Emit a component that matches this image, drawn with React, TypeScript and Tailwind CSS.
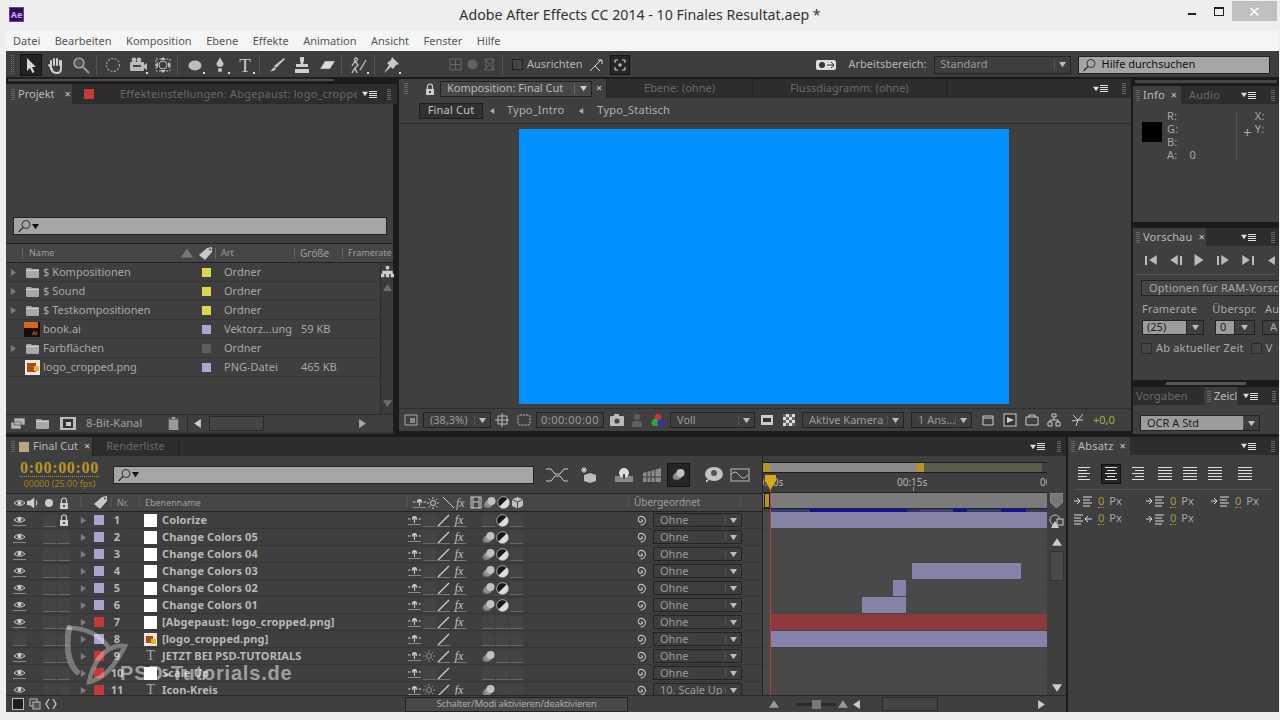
import React from 'react';

function Tri({ dir = 'down', size = 7, color = '#c4c4c4' }: { dir?: 'down' | 'up' | 'left' | 'right'; size?: number; color?: string }) {
  const pts = { down: '0,1 8,1 4,7', up: '0,7 8,7 4,1', left: '7,0 7,8 1,4', right: '1,0 1,8 7,4' }[dir];
  return (
    <svg width={size} height={size} viewBox="0 0 8 8" className="shrink-0">
      <polygon points={pts} fill={color} />
    </svg>
  );
}

function Grip() {
  return (
    <div className="flex flex-col gap-px shrink-0">
      {[0, 1, 2, 3, 4, 5].map((i) => (
        <div key={i} className="w-[4px] h-px bg-[#666]" />
      ))}
    </div>
  );
}

function PanelMenu() {
  return (
    <div className="flex items-center gap-px shrink-0">
      <Tri size={6} color="#ddd" />
      <div className="flex flex-col gap-px">
        <div className="w-[8px] h-px bg-[#ddd]" />
        <div className="w-[8px] h-px bg-[#ddd]" />
        <div className="w-[8px] h-px bg-[#ddd]" />
        <div className="w-[8px] h-px bg-[#ddd]" />
      </div>
    </div>
  );
}

function Close() {
  return <span className="text-[11px] leading-none text-[#c8c8c8]">×</span>;
}

function Sel({ label, className, text = 'text-[#9a9a9a]' }: { label: string; className: string; text?: string }) {
  return (
    <div className={`flex items-center border border-[#232323] bg-[#3e3e3e] shrink-0 overflow-hidden ${className}`}>
      <span className={`flex-1 pl-[6px] whitespace-nowrap overflow-hidden ${text}`}>{label}</span>
      <div className="w-px h-[70%] bg-[#555]" />
      <div className="w-[15px] flex justify-center shrink-0">
        <Tri size={7} color="#bbb" />
      </div>
    </div>
  );
}

function Search({ className, label }: { className: string; label?: string }) {
  return (
    <div className={`flex items-center border border-[#222] bg-[#a5a5a5] ${className}`}>
      <svg width="15" height="14" viewBox="0 0 15 14" className="ml-[3px] shrink-0">
        <circle cx="9" cy="5.5" r="4" fill="none" stroke="#333" strokeWidth="1" />
        <line x1="6" y1="8.5" x2="1.5" y2="13" stroke="#333" strokeWidth="1.2" />
      </svg>
      {label ? <span className="ml-[5px] text-[#111] text-[11px]">{label}</span> : <Tri size={7} color="#111" />}
    </div>
  );
}

function Svg({ w = 16, h = 16, children, className = '' }: { w?: number; h?: number; children: React.ReactNode; className?: string }) {
  return (
    <svg width={w} height={h} viewBox={`0 0 ${w} ${h}`} className={`shrink-0 ${className}`}>
      {children}
    </svg>
  );
}

const Eye = () => (
  <Svg w={13} h={11}>
    <path d="M1 5 Q6.5 -0.5 12 5 Q6.5 9.5 1 5Z" fill="none" stroke="#ccc" strokeWidth="1" />
    <circle cx="6.5" cy="4.6" r="2" fill="#ccc" />
    <line x1="0" y1="10.5" x2="13" y2="10.5" stroke="#8a8a8a" />
  </Svg>
);
const Lock = () => (
  <Svg w={10} h={12}>
    <path d="M2.5 6 V3.5 a2.5 2.5 0 0 1 5 0 V6" fill="none" stroke="#ccc" strokeWidth="1.2" />
    <rect x="1" y="6" width="8" height="6" fill="#ccc" />
    <rect x="4" y="8" width="2" height="2" fill="#444" />
  </Svg>
);
const Tag = () => (
  <Svg w={16} h={15}>
    <path d="M1 9 L9 2 L14 1 L14 6 L7 14Z" fill="#c8c8c8" />
    <circle cx="12" cy="3.5" r="1" fill="#444" />
  </Svg>
);
const Shy = () => (
  <Svg w={13} h={10}>
    <path d="M0 4 H2.5 M10.5 4 H13" stroke="#ccc" strokeWidth="1" />
    <path d="M4 3.5 a2.5 2.5 0 0 1 5 0 v1.2 h-5Z" fill="#ccc" />
    <path d="M5.5 3.5 V4.5 M7.5 3.5 V4.5" stroke="#444" strokeWidth="0.8" />
    <path d="M6.5 5 V8" stroke="#ccc" strokeWidth="1" />
    <line x1="0" y1="9.5" x2="13" y2="9.5" stroke="#8a8a8a" />
  </Svg>
);
const Slash = () => (
  <Svg w={13} h={13}>
    <line x1="1" y1="12" x2="12" y2="1" stroke="#d0d0d0" strokeWidth="1.2" />
    <line x1="0" y1="12.5" x2="13" y2="12.5" stroke="#777" />
  </Svg>
);
const Sun = ({ c = '#aaa' }: { c?: string }) => (
  <Svg w={12} h={12}>
    <circle cx="6" cy="6" r="2.5" fill="none" stroke={c} />
    <path d="M6 0 V2 M6 10 V12 M0 6 H2 M10 6 H12 M1.8 1.8 L3.2 3.2 M8.8 8.8 L10.2 10.2 M1.8 10.2 L3.2 8.8 M8.8 3.2 L10.2 1.8" stroke={c} />
  </Svg>
);
const Fx = () => (
  <span className="w-[13px] border-b border-[#777] h-[13px] flex items-center justify-center text-[12px] leading-none italic text-[#c4c4c4] [font-family:'Liberation_Serif',serif]">
    fx
  </span>
);
const Blur = () => (
  <Svg w={13} h={13}>
    <ellipse cx="4.5" cy="9" rx="4" ry="3" fill="#777" />
    <ellipse cx="6" cy="7.5" rx="4" ry="3.5" fill="#8f8f8f" />
    <circle cx="8.5" cy="5" r="4" fill="#c2c2c2" />
  </Svg>
);
const Adj = () => (
  <Svg w={13} h={13}>
    <circle cx="6.5" cy="6.5" r="5.8" fill="#181818" stroke="#c8c8c8" strokeWidth="0.8" />
    <path d="M10.6 2.4 A5.8 5.8 0 0 1 2.4 10.6Z" fill="#dcdcdc" />
  </Svg>
);
const Cube = () => (
  <Svg w={13} h={13}>
    <path d="M6.5 1 L12 3.5 V10 L6.5 12.5 L1 10 V3.5Z" fill="#c0c0c0" />
    <path d="M1 3.5 L6.5 6 L12 3.5 M6.5 6 V12.5" stroke="#444" fill="none" />
  </Svg>
);
const Spiral = () => (
  <Svg w={12} h={12}>
    <path d="M6 6 a1 1 0 0 1 1.5 1 a2.2 2.2 0 0 1 -3.5 0.5 a3.3 3.3 0 0 1 1 -5 a4.5 4.5 0 0 1 5.5 4 a5 5 0 0 1 -5 4.5" fill="none" stroke="#c4c4c4" strokeWidth="1.1" />
  </Svg>
);
const Box = () => <div className="w-[13px] h-[13px] bg-[#444] border-b border-[#666]" />;
const Folder = () => (
  <Svg w={13} h={11}>
    <path d="M0 2 Q0 1 1 1 H5 L6 2 H12 Q13 2 13 3 V10 Q13 11 12 11 H1 Q0 11 0 10Z" fill="#a8a8a8" />
    <rect x="0" y="3" width="13" height="1" fill="#d0d0d0" />
  </Svg>
);
const Thumb = ({ s = 14 }: { s?: number }) => (
  <Svg w={s} h={s}>
    <rect width={s} height={s} fill="#f0e8dc" />
    <rect x="2" y="3" width={s - 6} height={s - 6} fill="#b24a14" />
    <rect x={s - 6} y="6" width="5" height="5" fill="#e9b52c" />
  </Svg>
);
const AiIcon = () => (
  <Svg w={16} h={15}>
    <rect width="16" height="15" fill="#1a0d00" />
    <rect x="0" y="0" width="14" height="6" fill="#d3671a" />
    <text x="8" y="13" fontSize="6" fill="#e88a2a" fontFamily="Liberation Sans">Ai</text>
  </Svg>
);

/* toolbar drawings */
const tools: Record<string, React.ReactNode> = {
  arrow: <path d="M5 2 V15 L8 12 L10.5 17 L12.5 16 L10 11 L14 11Z" fill="#d8d8d8" />,
  hand: <path d="M4 9 V5 M7 9 V3 M10 9 V3 M13 9 V5 M4 9 L4 13 Q6 17 10 17 Q14 17 14 12 V5 M2 9 L5 13" stroke="#cfcfcf" strokeWidth="2" fill="none" strokeLinecap="round" />,
  zoom: (
    <>
      <circle cx="7" cy="7" r="5" fill="#555" stroke="#b8b8b8" strokeWidth="1.2" />
      <line x1="11" y1="11" x2="17" y2="17" stroke="#999" strokeWidth="2" />
    </>
  ),
  rotate: <circle cx="9" cy="9" r="6.5" fill="none" stroke="#999" strokeWidth="1.3" strokeDasharray="2 1.5" />,
  camera: (
    <>
      <rect x="1" y="6" width="14" height="9" rx="1" fill="#bbb" />
      <circle cx="5" cy="4" r="2.4" fill="#bbb" />
      <circle cx="10" cy="4" r="2.4" fill="#bbb" />
      <rect x="4" y="9" width="8" height="2" fill="#444" />
      <polygon points="15,9 18,7 18,14 15,12" fill="#bbb" />
    </>
  ),
  pan: (
    <>
      <rect x="2" y="3" width="14" height="12" fill="none" stroke="#bbb" strokeDasharray="2 1.5" />
      <circle cx="9" cy="9" r="4" fill="none" stroke="#bbb" />
      <path d="M9 1 L6 4 H12Z M9 17 L6 14 H12Z M1 9 L4 6 V12Z M17 9 L14 6 V12Z" fill="#bbb" />
    </>
  ),
  ellipse: <ellipse cx="9" cy="9.5" rx="6.5" ry="5" fill="#bdbdbd" />,
  pen: <path d="M9 1 L13 8 L11 11 H7 L5 8Z M7 12 H11 V16 H7Z" fill="#c8c8c8" stroke="#444" strokeWidth="0.5" />,
  type: <text x="9" y="16" textAnchor="middle" fontSize="19" fill="#c8c8c8" fontFamily="Liberation Serif">T</text>,
  brush: <path d="M16 2 L17 3 L8 12 L6 10Z M6 11 L8 13 Q5 16 2 15 Q4 14 6 11Z" fill="#c8c8c8" />,
  stamp: <path d="M7 1 H11 V5 L10 8 H15 V11 H3 V8 H8 L7 5Z M2 13 H16 V17 H2Z" fill="#d0d0d0" />,
  eraser: <path d="M7 5 H17 L12 13 H2Z" fill="#dcdcdc" stroke="#555" strokeWidth="0.5" />,
  roto: <path d="M6 2 a1.5 1.5 0 1 1 -0.1 0 M5 5 L8 9 L5 12 L7 17 M5 5 L2 10 M8 9 L5 12 L2 17 M10 14 L16 4" stroke="#bbb" strokeWidth="1.4" fill="none" />,
  pin: <path d="M10 1 L17 8 L14 9 L11 13 L9 11 L2 17 L7 9 L5 7 L9 4Z" fill="#c8c8c8" />,
};

function Tool({ name, active, corner, className = '' }: { name: string; active?: boolean; corner?: boolean; className?: string }) {
  return (
    <div className={`relative w-[25px] h-[25px] flex items-center justify-center shrink-0 ${className}`}>
      <div className={`w-[22px] h-[22px] flex items-center justify-center ${active ? 'bg-[#222] border border-[#111]' : ''}`}>
        <Svg w={18} h={18}>{tools[name]}</Svg>
      </div>
      {corner && <div className="absolute right-[2px] bottom-[3px] w-[2px] h-[2px] bg-[#ddd]" />}
    </div>
  );
}

const Sep = ({ className = '' }: { className?: string }) => <div className={`w-px h-[20px] bg-[#555] shrink-0 ${className}`} />;

function Toolbar() {
  return (
    <div className="h-[26px] pt-px bg-[#3d3d3d] flex items-center shrink-0 text-[11px] text-[#b4b4b4]">
      <div className="ml-[5px] w-[3px] h-[19px] border-x border-dotted border-[#777] mr-[4px]" />
      <Tool name="arrow" active />
      <Tool name="hand" />
      <Tool name="zoom" />
      <Sep className="ml-[3px] mr-[3px]" />
      <Tool name="rotate" />
      <Tool name="camera" corner />
      <Tool name="pan" />
      <Sep className="ml-[2px] mr-[4px]" />
      <Tool name="ellipse" corner />
      <Tool name="pen" corner />
      <Tool name="type" corner />
      <Sep className="ml-[2px] mr-[4px]" />
      <Tool name="brush" />
      <Tool name="stamp" />
      <Tool name="eraser" />
      <Sep className="ml-[2px] mr-[4px]" />
      <Tool name="roto" corner />
      <Sep className="ml-[3px] mr-[3px]" />
      <Tool name="pin" corner />
      <div className="ml-[46px] flex items-center gap-[4px] opacity-40">
        <Svg w={13} h={13}><path d="M1 1 H12 V12 H1Z M6.5 2 V11 M2 6.5 H11" fill="none" stroke="#aaa" /></Svg>
        <Svg w={13} h={13}><circle cx="6.5" cy="6.5" r="5" fill="#999" /></Svg>
        <Svg w={13} h={13}><path d="M1 1 L12 12 M12 1 L1 12 M3 1 H10 V12 H3Z" fill="none" stroke="#aaa" /></Svg>
      </div>
      <Sep className="ml-[6px] mr-[9px]" />
      <div className="w-[11px] h-[11px] border border-[#222] bg-[#444]" />
      <span className="ml-[4px]">Ausrichten</span>
      <Svg w={14} h={14} className="ml-[6px]"><path d="M1 13 L6 8 L11 13 M6 8 L12 2 M9 2 H13 V6" fill="none" stroke="#ddd" /></Svg>
      <div className="ml-[7px] w-[20px] h-[20px] bg-[#262626] border border-[#151515] flex items-center justify-center">
        <Svg w={12} h={12}><path d="M1 4 V1 H4 M8 1 H11 V4 M11 8 V11 H8 M4 11 H1 V8 M5 5 H7 V7 H5Z" fill="none" stroke="#ddd" /></Svg>
      </div>
      <Svg w={20} h={12} className="ml-[186px]">
        <rect x="0" y="1" width="20" height="10" rx="2" fill="#ddd" />
        <circle cx="6" cy="6" r="3" fill="#333" />
        <path d="M11 6 H18 M15 3 L18 6 L15 9" stroke="#333" fill="none" />
      </Svg>
      <span className="ml-[13px] whitespace-nowrap">Arbeitsbereich:</span>
      <Sel label="Standard" className="ml-[7px] w-[137px] h-[18px]" />
      <Search className="ml-[7px] w-[192px] h-[18px]" label="Hilfe durchsuchen" />
    </div>
  );
}

function ProjectPanel() {
  const rows = [
    { name: '$ Kompositionen', c: 'bg-[#dcd64e]', type: 'Ordner', size: '', icon: 'f' },
    { name: '$ Sound', c: 'bg-[#dcd64e]', type: 'Ordner', size: '', icon: 'f' },
    { name: '$ Testkompositionen', c: 'bg-[#dcd64e]', type: 'Ordner', size: '', icon: 'f' },
    { name: 'book.ai', c: 'bg-[#aaa6cf]', type: 'Vektorz...ung', size: '59 KB', icon: 'a' },
    { name: 'Farbflächen', c: 'bg-[#5e5e5e]', type: 'Ordner', size: '', icon: 'f' },
    { name: 'logo_cropped.png', c: 'bg-[#aaa6cf]', type: 'PNG-Datei', size: '465 KB', icon: 't' },
  ];
  return (
    <div className="w-[391px] flex flex-col shrink-0">
      <div className="ml-[2px] mt-px w-[326px] h-[4px] bg-[#4a4a4a] border-y border-[#222] shrink-0" />
      <div className="h-[20px] mt-[2px] flex items-center bg-[#2d2d2d] shrink-0 text-[11px]">
        <div className="w-[66px] h-full bg-[#3f3f3f] flex items-center pl-[5px] gap-[3px] text-[#b8b8b8]">
          <Grip />
          <span>Projekt</span>
          <div className="ml-[7px]"><Close /></div>
        </div>
        <div className="w-[12px]" />
        <div className="w-[10px] h-[10px] bg-[#c23b3b]" />
        <span className="ml-[26px] w-[237px] overflow-hidden whitespace-nowrap text-[#696969] tracking-[0.2px]">Effekteinstellungen: Abgepaust: logo_cropped.png</span>
        <div className="ml-[5px]"><PanelMenu /></div>
        <div className="ml-[10px]"><Grip /></div>
      </div>
      <div className="flex-1 bg-[#3f3f3f] flex flex-col mr-[4px] min-h-0">
        <div className="h-[113px] shrink-0" />
        <Search className="ml-[7px] w-[374px] h-[18px]" />
        <div className="h-[9px] shrink-0 border-b border-[#222]" />
        <div className="h-[19px] shrink-0 flex items-center text-[9px] text-[#9d9d9d] bg-[#464646] border-b border-[#222]">
          <div className="ml-[16px] w-px h-[11px] bg-[#666]" />
          <span className="ml-[6px] w-[152px]">Name</span>
          <Tri dir="up" size={12} color="#777" />
          <div className="ml-[5px]"><Tag /></div>
          <div className="ml-px w-px h-[11px] bg-[#666]" />
          <span className="ml-[5px] w-[73px]">Art</span>
          <div className="w-px h-[11px] bg-[#666]" />
          <span className="ml-[5px] w-[42px] text-[10px]">Größe</span>
          <div className="w-px h-[11px] bg-[#666]" />
          <span className="ml-[5px] whitespace-nowrap">Framerate</span>
        </div>
        <div className="flex-1 flex min-h-0">
          <div className="flex-1 flex flex-col text-[11px] text-[#a8a8a8]">
            {rows.map((r) => (
              <div key={r.name} className="h-[19px] shrink-0 flex items-center border-b border-[#363636]">
                <div className="ml-[4px] w-[8px]">{r.icon === 'f' && <Tri dir="right" size={7} color="#7a7a7a" />}</div>
                <div className="ml-[4px] w-[20px] flex justify-center">
                  {r.icon === 'f' ? <Folder /> : r.icon === 'a' ? <AiIcon /> : <Thumb s={15} />}
                </div>
                <span className="ml-px w-[159px] whitespace-nowrap">{r.name}</span>
                <div className={`w-[9px] h-[9px] ${r.c}`} />
                <span className="ml-[13px] w-[77px] whitespace-nowrap">{r.type}</span>
                <span className="whitespace-nowrap">{r.size}</span>
              </div>
            ))}
            <div className="flex-1" />
          </div>
          <div className="w-[13px] shrink-0 border-l border-[#2c2c2c] flex flex-col items-center bg-[#3b3b3b]">
            <Svg w={13} h={12} className="mt-[3px]">
              <path d="M5 0 H8 V3 H5Z M0 8 H3 V11 H0Z M5 8 H8 V11 H5Z M10 8 H13 V11 H10Z M1.5 8 V5 H11.5 V8 M6.5 3 V8" fill="#ccc" stroke="#ccc" strokeWidth="0.5" />
            </Svg>
            <div className="mt-[5px]"><Tri dir="up" size={9} color="#6e6e6e" /></div>
            <div className="flex-1" />
            <div className="mb-[6px]"><Tri size={9} color="#6e6e6e" /></div>
          </div>
        </div>
        <div className="h-[18px] shrink-0 flex items-center border-t border-[#2a2a2a] text-[11px] text-[#a0a0a0]">
          <Svg w={16} h={13} className="ml-[5px]"><path d="M3 1 H14 V8 H3Z M0 5 H10 V12 H0Z" fill="#b4b4b4" stroke="#444" strokeWidth="0.6" /></Svg>
          <div className="ml-[9px]"><Folder /></div>
          <Svg w={16} h={13} className="ml-[11px]"><rect width="16" height="13" fill="#bbb" /><rect x="3" y="2" width="10" height="9" fill="#333" /><rect x="6" y="5" width="5" height="4" fill="#ccc" /></Svg>
          <span className="ml-[10px] whitespace-nowrap">8-Bit-Kanal</span>
          <Svg w={11} h={13} className="ml-[26px]"><path d="M0 2 H11 M4 2 V0 H7 V2 M1 3 H10 V13 H1Z" fill="#9a9a9a" stroke="#9a9a9a" strokeWidth="0.6" /></Svg>
          <div className="ml-[8px] h-full flex flex-1 items-center border-l border-[#2a2a2a]">
            <div className="ml-[5px]"><Tri dir="left" size={9} color="#ccc" /></div>
            <div className="ml-[7px] w-[55px] h-[15px] bg-[#444] border border-[#282828]" />
            <div className="ml-auto mr-[8px]"><Tri dir="right" size={9} color="#aaa" /></div>
          </div>
          <div className="w-[18px]" />
        </div>
        <div className="h-[2px] shrink-0 bg-[#333]" />
      </div>
    </div>
  );
}

function CompPanel() {
  const Mini = ({ children, className = '' }: { children: React.ReactNode; className?: string }) => (
    <Svg w={14} h={14} className={className}>{children}</Svg>
  );
  return (
    <div className="w-[732px] flex flex-col shrink-0 mb-[3px]">
      <div className="h-[2px] shrink-0" />
      <div className="h-[19px] shrink-0 flex items-center bg-[#2d2d2d] text-[11px]">
        <div className="w-[208px] h-full bg-[#3f3f3f] flex items-center pl-[5px] border-r border-[#222] shrink-0">
          <Grip />
          <div className="ml-[17px] w-[10px] h-[10px] flex items-center justify-center"><Lock /></div>
          <div className="ml-[5px] w-[152px] h-[16px] border border-[#222] bg-[#474747] flex items-center text-[#b8b8b8]">
            <span className="ml-[6px] flex-1 whitespace-nowrap">Komposition: Final Cut</span>
            <div className="w-px h-[10px] bg-[#666]" />
            <div className="w-[16px] flex justify-center"><Tri color="#ccc" /></div>
          </div>
          <div className="ml-[4px]"><Close /></div>
        </div>
        <div className="w-[146px] h-full flex items-center justify-center text-[#696969] border-r border-[#222] shrink-0">Ebene: (ohne)</div>
        <div className="w-[194px] h-full flex items-center justify-center text-[#696969] border-r border-[#222] shrink-0">Flussdiagramm: (ohne)</div>
        <div className="ml-auto mr-[14px]"><PanelMenu /></div>
        <div className="mr-[5px]"><Grip /></div>
      </div>
      <div className="h-[26px] shrink-0 bg-[#3f3f3f] border-b border-[#2b2b2b] flex items-center text-[11px] text-[#b0b0b0] tracking-[0.2px]">
        <div className="ml-[20px] w-[64px] h-[16px] bg-[#303030] border border-[#1e1e1e] flex items-center justify-center text-[#c4c4c4]">Final Cut</div>
        <div className="ml-[6px]"><Tri dir="left" size={6} color="#aaa" /></div>
        <span className="ml-[12px]">Typo_Intro</span>
        <div className="ml-[14px]"><Tri dir="left" size={6} color="#aaa" /></div>
        <span className="ml-[13px]">Typo_Statisch</span>
      </div>
      <div className="flex-1 min-h-0 bg-[#3f3f3f] flex items-start">
        <div className="ml-[120px] mt-[5px] w-[490px] h-[275px] bg-[#0090ff]" />
      </div>
      <div className="h-[23px] shrink-0 bg-[#3f3f3f] border-t border-[#2f2f2f] flex items-center text-[11px] text-[#9a9a9a]">
        <Mini className="ml-[5px]"><path d="M1 2 H13 V12 H1Z" fill="none" stroke="#aaa" /><rect x="6" y="5" width="5" height="5" fill="#888" /></Mini>
        <Sel label="(38,3%)" className="ml-[5px] w-[68px] h-[16px]" />
        <Mini className="ml-[4px]"><path d="M3 3 H12 V11 H3Z M0 7 H15 M7 0 V14" fill="none" stroke="#bbb" /></Mini>
        <Mini className="ml-[8px]"><rect x="1" y="2" width="12" height="10" rx="2" fill="none" stroke="#bbb" strokeDasharray="2 1" /></Mini>
        <div className="ml-[5px] w-[68px] h-[16px] border border-[#232323] flex items-center justify-center tracking-[0.5px] shrink-0">0:00:00:00</div>
        <Mini className="ml-[6px]"><rect y="3" width="14" height="10" rx="1" fill="#bbb" /><rect x="4" y="1" width="5" height="3" fill="#bbb" /><circle cx="7" cy="8" r="2.6" fill="#444" /></Mini>
        <Mini className="ml-[6px]"><circle cx="7" cy="4" r="3" fill="#5f5f5f" /><path d="M2 14 V10 Q2 8 7 8 Q12 8 12 10 V14Z" fill="#5f5f5f" /></Mini>
        <Mini className="ml-[7px]"><circle cx="7" cy="4.5" r="3.5" fill="#c33" /><circle cx="4" cy="9.5" r="3.5" fill="#3a3" /><circle cx="10" cy="9.5" r="3.5" fill="#33a" /></Mini>
        <Sel label="Voll" className="ml-[5px] w-[85px] h-[16px]" />
        <Mini className="ml-[5px]"><rect x="1" y="2" width="12" height="10" fill="#ccc" /><rect x="3" y="5" width="8" height="4" fill="#333" /></Mini>
        <Mini className="ml-[8px]"><rect x="1" y="1" width="12" height="12" fill="#ddd" /><path d="M1 1 H4 V4 H1Z M7 1 H10 V4 H7Z M4 4 H7 V7 H4Z M10 4 H13 V7 H10Z M1 7 H4 V10 H1Z M7 7 H10 V10 H7Z M4 10 H7 V13 H4Z M10 10 H13 V13 H10Z" fill="#666" /></Mini>
        <Sel label="Aktive Kamera" className="ml-[6px] w-[102px] h-[16px]" />
        <Sel label="1 Ans..." className="ml-[7px] w-[61px] h-[16px]" />
        <Mini className="ml-[9px]"><path d="M2 3 H12 V12 H2Z M2 5 H12" fill="none" stroke="#ccc" /></Mini>
        <Mini className="ml-[8px]"><rect x="1" y="1" width="12" height="12" fill="#333" stroke="#ccc" /><polygon points="4,4 11,7 4,10" fill="#ccc" /></Mini>
        <Mini className="ml-[8px]"><path d="M1 4 H13 V12 H1Z M4 4 V2 H10 V4" fill="none" stroke="#ccc" /></Mini>
        <Mini className="ml-[8px]"><path d="M5 1 H9 V4 H5Z M1 9 H5 V13 H1Z M9 9 H13 V13 H9Z M7 4 V7 H3 V9 M7 7 H11 V9" fill="none" stroke="#ccc" /></Mini>
        <Mini className="ml-[10px]"><path d="M7 7 L2 2 M7 7 L12 1 M7 7 L1 8 M7 7 L12 7 M7 7 L5 13" stroke="#ccc" fill="none" /></Mini>
        <span className="ml-[8px] text-[#a8ad4a] whitespace-nowrap">+0,0</span>
      </div>
    </div>
  );
}

function SmallTabs({ active, other, activeW }: { active: string; other: string; activeW: string }) {
  return (
    <div className="h-[18px] flex items-center bg-[#2d2d2d] text-[11px] shrink-0 overflow-hidden">
      <div className={`${activeW} h-full bg-[#3f3f3f] flex items-center pl-[3px] gap-[3px] text-[#b8b8b8] shrink-0 tracking-[0.2px]`}>
        <Grip />
        <span>{active}</span>
        <div className="ml-[3px]"><Close /></div>
      </div>
      {other && <span className="ml-[8px] text-[#696969] tracking-[0.2px]">{other}</span>}
      <div className="ml-auto mr-[6px]"><PanelMenu /></div>
      <div className="mr-[4px] ml-[9px]"><Grip /></div>
    </div>
  );
}

function RightColumn() {
  const btn = (dir: 'left' | 'right', bar: 'l' | 'r') => (
    <div className="w-[24px] flex items-center justify-center gap-px shrink-0">
      {bar === 'l' && <div className="w-[2px] h-[9px] bg-[#bbb]" />}
      <Tri dir={dir} size={10} color="#bbb" />
      {bar === 'r' && <div className="w-[2px] h-[9px] bg-[#bbb]" />}
    </div>
  );
  return (
    <div className="flex-1 flex flex-col min-w-0 text-[11px] text-[#a8a8a8] overflow-hidden">
      <div className="h-[4px] mt-[3px] mx-[2px] bg-[#444] border-b border-[#222] shrink-0" />
      <div className="h-[2px] shrink-0" />
      <SmallTabs active="Info" other="Audio" activeW="w-[48px]" />
      <div className="h-[118px] shrink-0 bg-[#3f3f3f] flex items-start tracking-[0.2px]">
        <div className="ml-[9px] mt-[18px] w-[20px] h-[20px] bg-black shrink-0" />
        <div className="ml-[5px] mt-[5px] w-[69px] flex flex-col leading-[13px] shrink-0">
          <span>R:</span>
          <span>G:</span>
          <span>B:</span>
          <span>A:&nbsp;&nbsp;&nbsp;&nbsp;0</span>
        </div>
        <div className="mt-[8px] w-px h-[48px] bg-[#555] shrink-0" />
        <span className="ml-[6px] mt-[21px] text-[15px] leading-none">+</span>
        <div className="ml-[3px] mt-[5px] flex flex-col leading-[13px]">
          <span>X:</span>
          <span>Y:</span>
        </div>
      </div>
      <div className="h-[6px] shrink-0" />
      <SmallTabs active="Vorschau" other="" activeW="w-[73px]" />
      <div className="h-[134px] shrink-0 bg-[#3f3f3f] overflow-hidden">
        <div className="h-[29px] mx-[3px] border-b border-[#555] flex items-center pl-[3px]">
          {btn('left', 'l')}
          {btn('left', 'r')}
          <div className="w-[24px] flex justify-center shrink-0"><Tri dir="right" size={12} color="#bbb" /></div>
          {btn('right', 'l')}
          {btn('right', 'r')}
          <div className="w-[24px] flex justify-center shrink-0"><Tri dir="left" size={9} color="#bbb" /></div>
        </div>
        <div className="ml-[8px] mt-[5px] w-[160px] h-[16px] border border-[#232323] bg-[#464646] flex items-center pl-[7px] whitespace-nowrap tracking-[0.2px]">Optionen für RAM-Vorschau</div>
        <div className="ml-[9px] mt-[6px] flex gap-[17px] tracking-[0.2px] whitespace-nowrap leading-[14px]">
          <span>Framerate</span>
          <span className="-ml-[2px]">Überspr.</span>
          <span className="-ml-[9px]">Auflösung</span>
        </div>
        <div className="ml-[9px] mt-[4px] flex items-center text-[#222] whitespace-nowrap">
          <div className="w-[45px] h-[15px] bg-[#9c9c9c] pl-[4px] flex items-center border border-[#232323] shrink-0">(25)</div>
          <div className="w-[17px] h-[15px] border border-[#232323] border-l-0 flex items-center justify-center shrink-0"><Tri color="#bbb" /></div>
          <div className="ml-[11px] w-[20px] h-[15px] bg-[#9c9c9c] pl-[4px] flex items-center border border-[#232323] shrink-0">0</div>
          <div className="w-[20px] h-[15px] border border-[#232323] border-l-0 flex items-center justify-center shrink-0"><Tri color="#bbb" /></div>
          <div className="ml-[7px] w-[30px] h-[15px] border border-[#232323] pl-[7px] flex items-center text-[#a8a8a8] shrink-0">A</div>
        </div>
        <div className="ml-[8px] mt-[5px] flex items-center whitespace-nowrap tracking-[0.2px]">
          <div className="w-[11px] h-[11px] border border-[#2a2a2a] bg-[#444] shrink-0" />
          <span className="ml-[4px]">Ab aktueller Zeit</span>
          <div className="ml-[7px] w-[11px] h-[11px] border border-[#2a2a2a] bg-[#444] shrink-0" />
          <span className="ml-[4px]">V</span>
        </div>
      </div>
      <div className="h-[7px] shrink-0 flex items-center justify-center">
        <div className="w-[80px] h-[3px] bg-[#555]" />
      </div>
      <div className="h-[18px] flex items-center bg-[#2d2d2d] shrink-0">
        <span className="ml-[2px] w-[69px] h-full flex items-center text-[#696969] tracking-[0.2px] pl-px">Vorgaben</span>
        <div className="w-[33px] h-full bg-[#3f3f3f] flex items-center pl-[3px] gap-[3px] text-[#b8b8b8] overflow-hidden shrink-0">
          <Grip />
          <span>Zeicl</span>
        </div>
        <div className="ml-[6px]"><PanelMenu /></div>
        <div className="ml-[14px]"><Grip /></div>
      </div>
      <div className="flex-1 bg-[#3f3f3f] flex items-start">
        <Sel label="OCR A Std" className="ml-[7px] mt-[10px] w-[120px] h-[16px]" text="text-[#222] bg-[#9c9c9c] h-full flex items-center" />
      </div>
    </div>
  );
}

type Row = { n: number; name: string; label: string; src: 's' | 't' | 'x'; eye?: boolean; lock?: boolean; sun?: boolean; fx?: boolean; blur?: boolean; adj?: boolean; parent?: string; noBox?: boolean; bar?: string };
const LAV = 'bg-[#a8a4cc]';
const RED = 'bg-[#bf3a3a]';
const layers: Row[] = [
  { n: 1, name: 'Colorize', label: LAV, src: 's', eye: true, lock: true, fx: true, adj: true, bar: 'ml-[8px] w-[276px] bg-[#8683a8]' },
  { n: 2, name: 'Change Colors 05', label: LAV, src: 's', eye: true, fx: true, blur: true, adj: true },
  { n: 3, name: 'Change Colors 04', label: LAV, src: 's', eye: true, fx: true, blur: true, adj: true },
  { n: 4, name: 'Change Colors 03', label: LAV, src: 's', eye: true, fx: true, blur: true, adj: true, bar: 'ml-[149px] w-[109px] bg-[#8683a8]' },
  { n: 5, name: 'Change Colors 02', label: LAV, src: 's', eye: true, fx: true, blur: true, adj: true, bar: 'ml-[130px] w-[13px] bg-[#8683a8]' },
  { n: 6, name: 'Change Colors 01', label: LAV, src: 's', eye: true, fx: true, blur: true, adj: true, bar: 'ml-[99px] w-[44px] bg-[#8683a8]' },
  { n: 7, name: '[Abgepaust: logo_cropped.png]', label: RED, src: 's', eye: true, fx: true, bar: 'ml-[8px] w-[276px] bg-[#8c3a3e]' },
  { n: 8, name: '[logo_cropped.png]', label: LAV, src: 'x', noBox: true, bar: 'ml-[8px] w-[276px] bg-[#8683a8]' },
  { n: 9, name: 'JETZT BEI PSD-TUTORIALS', label: RED, src: 't', eye: true, sun: true, fx: true, blur: true },
  { n: 10, name: 'Scale Up', label: RED, src: 's', eye: true },
  { n: 11, name: 'Icon-Kreis', label: RED, src: 't', eye: true, sun: true, fx: true, blur: true, parent: '10. Scale Up' },
];

function LayerRow({ r }: { r: Row }) {
  const cell = 'w-[14px] flex justify-center shrink-0';
  return (
    <div className="h-[17px] shrink-0 flex items-center border-b border-[#363636] text-[11px]">
      <div className="ml-[7px] w-[13px] flex justify-center shrink-0">{r.eye ? <Eye /> : <Box />}</div>
      <div className="w-[17px] shrink-0" />
      <div className="w-[14px] shrink-0"><Box /></div>
      <div className="w-[14px] shrink-0">{r.lock ? <div className="w-[13px] h-[13px] flex justify-center"><Lock /></div> : <Box />}</div>
      <div className="ml-[9px] w-[7px] shrink-0"><Tri dir="right" size={7} color="#7d7d7d" /></div>
      <div className={`ml-[7px] w-[10px] h-[10px] shrink-0 ${r.label}`} />
      <span className="w-[26px] text-center font-bold text-[#b8b8b8] shrink-0">{r.n}</span>
      <div className="ml-[14px] w-[13px] h-[13px] shrink-0 flex items-center justify-center">
        {r.src === 's' && <div className="w-[13px] h-[13px] bg-white" />}
        {r.src === 'x' && <Thumb s={13} />}
        {r.src === 't' && <span className="text-[14px] leading-none text-[#aaa] [font-family:'Liberation_Serif',serif]">T</span>}
      </div>
      <span className="ml-[5px] w-[245px] font-bold text-[#b8b8b8] whitespace-nowrap shrink-0 tracking-[0.1px]">{r.name}</span>
      <div className={`${cell} w-[15px]`}><Shy /></div>
      <div className={cell}>{r.sun ? <Sun c="#8f8f8f" /> : r.noBox ? null : <Box />}</div>
      <div className={cell}><Slash /></div>
      <div className={`${cell} ml-[2px]`}>{r.fx ? <Fx /> : null}</div>
      <div className="w-[15px] shrink-0" />
      <div className={cell}>{r.blur ? <Blur /> : <Box />}</div>
      <div className={cell}>{r.adj ? <Adj /> : <Box />}</div>
      <div className={cell}><Box /></div>
      <div className="ml-[112px] w-[12px] shrink-0"><Spiral /></div>
      <Sel label={r.parent ?? 'Ohne'} className="ml-[6px] w-[89px] h-[14px]" />
    </div>
  );
}

const motionStrip = [
  'w-[40px] bg-[#3a3a72]', 'w-[30px] bg-[#10129a]', 'w-[70px] bg-[#10129a]', 'w-[12px] bg-[#34346e]', 'w-[35px] bg-[#3e3e72]',
  'w-[15px] bg-[#10129a]', 'w-[35px] bg-[#3a3a72]', 'w-[25px] bg-[#10129a]', 'w-[22px] bg-[#3a3a5a]',
];

function Timeline() {
  return (
    <div className="w-[1060px] h-full flex flex-col shrink-0 bg-[#3f3f3f]">
      <div className="h-[19px] shrink-0 flex items-center bg-[#2d2d2d] text-[11px]">
        <div className="w-[87px] h-full bg-[#3f3f3f] flex items-center pl-[5px] text-[#b8b8b8] border-r border-[#222] whitespace-nowrap">
          <Grip />
          <div className="ml-[4px] w-[10px] h-[10px] bg-[#b9a585] shrink-0" />
          <span className="ml-[4px]">Final Cut</span>
          <div className="ml-[6px]"><Close /></div>
        </div>
        <span className="w-[86px] h-full flex items-center justify-center text-[#696969] border-r border-[#222]">Renderliste</span>
        <div className="ml-auto mr-[12px]"><PanelMenu /></div>
        <div className="mr-[5px]"><Grip /></div>
      </div>
      <div className="flex-1 min-h-0 flex relative">
        <div className="w-[757px] shrink-0 flex flex-col min-h-0 border-r border-[#222]">
          <div className="h-[37px] shrink-0 flex items-center">
            <div className="ml-[12px] w-[83px] flex flex-col items-center">
              <span className="text-[16px] leading-[16px] font-bold text-[#b5971f] border-b border-dotted border-[#b5971f] whitespace-nowrap [font-family:'Liberation_Serif',serif] tracking-[0.7px]">0:00:00:00</span>
              <span className="text-[9px] leading-[13px] text-[#9c8420] whitespace-nowrap">00000 (25.00 fps)</span>
            </div>
            <Search className="ml-[12px] w-[421px] h-[18px]" />
            <div className="ml-[11px] flex items-center">
              <Svg w={24} h={16}><path d="M1 2 H6 L10 7 H15 L19 2 H23 M1 14 H6 L10 9 H15 L19 14 H23" stroke="#ccc" fill="none" /></Svg>
              <Svg w={20} h={18} className="ml-[11px]"><path d="M10 7 L16 9 V15 L10 17 L4 15 V9Z" fill="#bbb" /><path d="M4 1 L4 7 M1 4 H7 M2 2 L6 6 M6 2 L2 6" stroke="#ddd" /></Svg>
              <Svg w={20} h={16} className="ml-[14px]"><path d="M1 9 H19 V15 H1Z" fill="#888" /><circle cx="10" cy="6" r="5" fill="#ddd" /><rect x="9" y="7" width="2" height="5" fill="#444" /></Svg>
              <Svg w={20} h={16} className="ml-[8px]"><path d="M1 6 L19 1 V15 H1Z" fill="#8a8a8a" /><path d="M5 2 V15 M9 2 V15 M13 2 V15 M1 10 H19" stroke="#3f3f3f" /></Svg>
              <div className="ml-[5px] w-[23px] h-[24px] bg-[#252525] border border-[#151515] flex items-center justify-center"><Blur /></div>
              <Svg w={20} h={18} className="ml-[13px]"><ellipse cx="11" cy="8" rx="9" ry="7" fill="#c4c4c4" /><circle cx="11" cy="7" r="3" fill="#555" /><path d="M3 14 L7 13 L3 17Z" fill="#c4c4c4" /></Svg>
              <Svg w={20} h={14} className="ml-[7px]"><rect x="1" y="1" width="18" height="12" fill="none" stroke="#bbb" /><path d="M1 7 Q5 1 9 7 T18 7" fill="none" stroke="#bbb" /></Svg>
            </div>
          </div>
          <div className="h-[19px] shrink-0 flex items-center text-[9px] text-[#9d9d9d] border-y border-[#222] bg-[#464646]">
            <div className="ml-[7px]"><Svg w={13} h={10}><path d="M1 5 Q6.5 0 12 5 Q6.5 10 1 5Z" fill="none" stroke="#ccc" /><circle cx="6.5" cy="5" r="2" fill="#ccc" /></Svg></div>
            <Svg w={12} h={12} className="ml-px"><path d="M0 4 H3 L7 1 V11 L3 8 H0Z M9 3 Q11 6 9 9" fill="#ccc" stroke="#ccc" strokeWidth="0.5" /></Svg>
            <div className="ml-[6px] w-[8px] h-[8px] rounded-full bg-[#ccc]" />
            <div className="ml-[6px]"><Lock /></div>
            <div className="ml-[11px] w-px h-[11px] bg-[#555]" />
            <div className="ml-[12px]"><Tag /></div>
            <div className="ml-[2px] w-px h-[11px] bg-[#555]" />
            <span className="ml-[5px] w-[22px]">Nr.</span>
            <div className="w-px h-[11px] bg-[#555]" />
            <span className="ml-[5px] w-[262px]">Ebenenname</span>
            <div className="w-px h-[11px] bg-[#555]" />
            <div className="ml-[5px] flex items-center gap-px">
              <Shy /><Sun c="#ccc" /><div className="w-px" /><Svg w={13} h={13}><line x1="1" y1="1" x2="12" y2="12" stroke="#ccc" /></Svg>
              <span className="w-[13px] text-[12px] italic text-[#bbb] [font-family:'Liberation_Serif',serif]">fx</span>
              <Svg w={12} h={13}><rect x="1" y="1" width="10" height="11" fill="none" stroke="#ccc" /><path d="M3 1 V12 M9 1 V12 M3 6 H9" stroke="#ccc" /></Svg>
              <Blur /><Adj /><Cube />
            </div>
            <div className="ml-[104px] w-px h-[11px] bg-[#555]" />
            <span className="ml-[5px] w-[106px] text-[10px] whitespace-nowrap">Übergeordnet</span>
            <div className="w-px h-[11px] bg-[#555]" />
          </div>
          <div className="flex-1 min-h-0 overflow-hidden flex flex-col">
            {layers.map((r) => <LayerRow key={r.n} r={r} />)}
          </div>
        </div>
        <div className="w-[284px] shrink-0 flex flex-col min-h-0">
          <div className="h-[6px] shrink-0" />
          <div className="h-[11px] shrink-0 flex border-y border-[#1c1c1c]">
            <div className="w-[7px] bg-[#b5951f]" />
            <div className="w-[147px] bg-[#8a8a8a]" />
            <div className="w-[7px] bg-[#b5951f]" />
            <div className="w-[118px] bg-[#5c5c4c]" />
          </div>
          <div className="h-[20px] shrink-0 flex items-center text-[10px] text-[#b4b4b4] border-b border-[#222] whitespace-nowrap overflow-hidden relative">
            <span className="ml-[-10px] w-[30px] shrink-0">00:00s</span>
            <span className="ml-[114px] w-[30px] shrink-0">00:15s</span>
            <span className="ml-[113px] shrink-0">00:30s</span>
            <div className="absolute left-[150px] bottom-px w-px h-[4px] bg-[#999]" />
          </div>
          <div className="h-[16px] shrink-0 flex bg-[#7b7b7b] border-b border-[#222]">
            <div className="ml-px w-[6px] bg-[#b5951f] border border-[#222]" />
          </div>
          <div className="h-[3px] shrink-0 flex pl-[8px]">
            {motionStrip.map((c, i) => <div key={i} className={c} />)}
          </div>
          <div className="flex-1 min-h-0 overflow-hidden flex flex-col bg-[#494949]">
            {layers.map((r) => (
              <div key={r.n} className="h-[17px] shrink-0 flex border-b border-[#454545]">
                {r.bar && <div className={r.bar} />}
              </div>
            ))}
          </div>
        </div>
        <div className="flex-1 flex flex-col items-center min-h-0">
          <div className="h-[37px] shrink-0" />
          <Svg w={13} h={15}><path d="M0 0 H13 V9 L6.5 15 L0 9Z" fill="#777" stroke="#aaa" strokeWidth="0.6" /></Svg>
          <div className="h-[4px] shrink-0" />
          <Svg w={15} h={15} className="mt-[2px]"><circle cx="6" cy="6" r="5" fill="none" stroke="#bbb" /><path d="M2 14 L6 7 L10 14Z" fill="#ccc" /><rect x="8" y="5" width="6" height="6" fill="#444" stroke="#ccc" /></Svg>
          <div className="mt-[5px] h-[15px] flex items-center"><Tri dir="up" size={10} color="#ccc" /></div>
          <div className="mt-[2px] w-[14px] h-[30px] bg-[#4a4a4a] border border-[#333]" />
          <div className="flex-1" />
          <div className="mb-[2px]"><Tri size={10} color="#ccc" /></div>
        </div>
        <div className="absolute left-[764px] top-[18px] bottom-0 w-px bg-[#c03a3a]" />
        <Svg w={13} h={16} className="absolute left-[758px] top-[18px]"><path d="M1 1 H12 V7 L6.5 16 L1 7Z" fill="#d8a91a" /></Svg>
      </div>
      <div className="h-[17px] shrink-0 flex items-center border-t border-[#2a2a2a]">
        <div className="ml-[6px] w-[12px] h-[12px] bg-[#1e1e1e] border border-[#bbb]" />
        <Svg w={12} h={12} className="ml-[5px]"><rect x="1" y="1" width="7" height="7" fill="none" stroke="#bbb" /><rect x="4" y="4" width="7" height="7" fill="#555" stroke="#bbb" /></Svg>
        <Svg w={12} h={12} className="ml-[4px]"><path d="M4 1 L1 6 L4 11 M8 1 L11 6 L8 11" fill="none" stroke="#ccc" strokeWidth="1.3" /></Svg>
        <div className="ml-[348px] w-[223px] h-[15px] border border-[#222] bg-[#484848] flex items-center justify-center text-[9.5px] tracking-[-0.2px] text-[#aaa] whitespace-nowrap">Schalter/Modi aktivieren/deaktivieren</div>
        <div className="ml-[141px]"><Tri dir="up" size={10} color="#999" /></div>
        <div className="ml-[17px] w-[40px] h-[3px] bg-[#2a2a2a] flex items-center justify-center"><div className="w-[9px] h-[9px] bg-[#777]" /></div>
        <div className="ml-[2px]"><Tri dir="up" size={10} color="#999" /></div>
        <div className="ml-[4px]"><Tri dir="left" size={9} color="#ccc" /></div>
        <div className="ml-[21px] w-[56px] h-[14px] bg-[#444] border border-[#282828]" />
        <div className="ml-[99px]"><Tri dir="right" size={9} color="#ccc" /></div>
      </div>
    </div>
  );
}

function AlignIcon({ kind, active }: { kind: string; active?: boolean }) {
  const lines = {
    l: [12, 9, 12, 9, 12],
    c: [12, 8, 12, 8, 12],
    r: [12, 9, 12, 9, 12],
    j: [14, 14, 14, 14, 14],
  }[kind] as number[];
  const justify = kind === 'c' ? 'items-center' : kind === 'r' ? 'items-end' : 'items-start';
  return (
    <div className={`w-[20px] h-[20px] flex flex-col justify-center gap-[2px] shrink-0 ${justify} ${active ? 'bg-[#262626] border border-[#111]' : ''} px-[2px]`}>
      {lines.map((w, i) => (
        <div key={i} className="h-px bg-[#ddd]" style={{ width: w }} />
      ))}
    </div>
  );
}

function Zero() {
  return <span className="text-[#a59a50] border-b border-dotted border-[#a59a50] leading-[12px]">0</span>;
}

function Indent({ flip }: { flip?: boolean }) {
  return (
    <Svg w={19} h={12}>
      {flip ? (
        <path d="M0 2 H9 M0 5 H7 M0 8 H9 M0 11 H7 M11 6 H18 M14 3 L11 6 L14 9" stroke="#ddd" fill="none" />
      ) : (
        <path d="M0 6 H6 M3 3 L6 6 L3 9 M9 2 H18 M9 5 H16 M9 8 H18 M9 11 H16" stroke="#ddd" fill="none" />
      )}
    </Svg>
  );
}

function AbsatzPanel() {
  const Field = ({ flip, className }: { flip?: boolean; className: string }) => (
    <div className={`flex items-center gap-[5px] shrink-0 ${className}`}>
      <Indent flip={flip} />
      <Zero />
      <span>Px</span>
    </div>
  );
  return (
    <div className="flex-1 h-full flex flex-col bg-[#3f3f3f] text-[11px] text-[#a8a8a8] min-w-0">
      <SmallTabs active="Absatz" other="" activeW="w-[62px]" />
      <div className="h-[32px] shrink-0 mx-[7px] mt-[3px] flex items-center border-b border-[#555] gap-[5px] pl-px">
        <AlignIcon kind="l" />
        <AlignIcon kind="c" active />
        <AlignIcon kind="r" />
        <div className="ml-[5px]"><AlignIcon kind="j" /></div>
        <AlignIcon kind="j" />
        <AlignIcon kind="j" />
        <div className="ml-[5px]"><AlignIcon kind="j" /></div>
      </div>
      <div className="ml-[6px] mt-[2px] flex h-[18px]">
        <Field className="w-[72px]" />
        <Field className="w-[65px]" />
        <Field className="" />
      </div>
      <div className="ml-[6px] flex h-[17px]">
        <Field flip className="w-[72px]" />
        <Field className="" />
      </div>
    </div>
  );
}

export default function App() {
  return (
    <div className="relative w-[1280px] h-[720px] overflow-hidden bg-[#eeeeee] flex flex-col [font-family:'Noto_Sans',sans-serif]">
      {/* title bar */}
      <div className="h-[31px] shrink-0 flex items-start">
        <div className="ml-[9px] mt-[7px] w-[15px] h-[15px] bg-[#2b1055] border border-[#6a3fa0] flex items-center justify-center text-[9px] leading-none text-[#c9a6ff] font-bold">Ae</div>
        <div className="ml-[68px] flex-1 text-center text-[14.2px] leading-[30px] text-[#333] whitespace-nowrap">Adobe After Effects CC 2014 - 10 Finales Resultat.aep *</div>
        <div className="w-[8px] h-[2px] bg-[#222] mt-[13px] shrink-0" />
        <div className="ml-[18px] mt-[7px] w-[10px] h-[9px] border border-[#222] border-t-2 shrink-0" />
        <div className="ml-[8px] mt-px mr-[3px] w-[45px] h-[20px] bg-[#c0c0c0] flex items-center justify-center text-white text-[15px] leading-none shrink-0">✕</div>
      </div>
      {/* menu bar */}
      <div className="h-[20px] shrink-0 ml-[6px] mr-px bg-[#f5f5f5] flex items-center pl-[7px] gap-[14.5px] text-[11px] text-[#555]">
        {['Datei', 'Bearbeiten', 'Komposition', 'Ebene', 'Effekte', 'Animation', 'Ansicht', 'Fenster', 'Hilfe'].map((m) => (
          <span key={m}>{m}</span>
        ))}
      </div>
      {/* application */}
      <div className="ml-[6px] mr-px h-[661px] shrink-0 bg-[#1b1b1b] flex flex-col">
        <Toolbar />
        <div className="h-[357px] shrink-0 flex gap-[2px]">
          <ProjectPanel />
          <CompPanel />
          <RightColumn />
        </div>
        <div className="h-[3px] shrink-0" />
        <div className="h-[275px] shrink-0 flex gap-[2px]">
          <Timeline />
          <AbsatzPanel />
        </div>
      </div>
      {/* watermark */}
      <div className="absolute left-[65px] top-[622px] flex items-end pointer-events-none">
        <svg width="66" height="66" viewBox="0 0 66 66" className="shrink-0">
          <path d="M4 6 Q-1 36 12 50" fill="none" stroke="#ffffff" strokeOpacity="0.3" strokeWidth="6" strokeLinecap="round" />
          <path d="M4 6 Q30 6 44 26 M60 24 Q46 22 34 36 Q26 48 24 60 Q44 56 60 24Z" fill="none" stroke="#ffffff" strokeOpacity="0.32" strokeWidth="4.5" strokeLinecap="round" />
        </svg>
        <span className="ml-[-11px] mb-[3px] text-[20px] leading-[24px] font-bold text-white/50 whitespace-nowrap tracking-[0.8px] [font-family:'Liberation_Sans',sans-serif]">PSD-Tutorials.de</span>
      </div>
    </div>
  );
}
